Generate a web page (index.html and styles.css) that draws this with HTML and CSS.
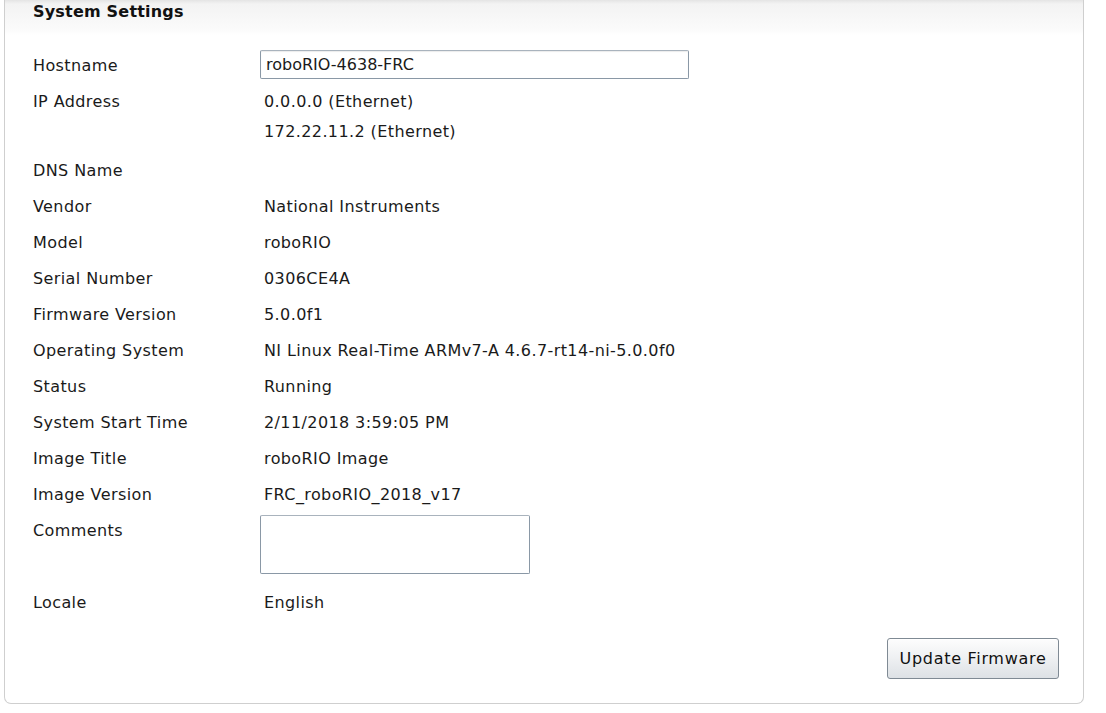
FILE: index.html
```html
<!DOCTYPE html>
<html>

<head>
    <meta charset="utf-8">
    <title>System Settings</title>
    <link rel="stylesheet" href="styles.css">
</head>

<body>
    <div class="panel">
        <div class="panel-head">System Settings</div>
        <div class="panel-body">
            <div class="row">
                <div class="label">Hostname</div>
                <div class="value"><input class="field" type="text" value="roboRIO-4638-FRC"></div>
            </div>
            <div class="row">
                <div class="label">IP Address</div>
                <div class="value ip-list">
                    <div>0.0.0.0 (Ethernet)</div>
                    <div class="ip-more">172.22.11.2 (Ethernet)</div>
                </div>
            </div>
            <div class="row">
                <div class="label">DNS Name</div>
                <div class="value"></div>
            </div>
            <div class="row">
                <div class="label">Vendor</div>
                <div class="value">National Instruments</div>
            </div>
            <div class="row">
                <div class="label">Model</div>
                <div class="value">roboRIO</div>
            </div>
            <div class="row">
                <div class="label">Serial Number</div>
                <div class="value">0306CE4A</div>
            </div>
            <div class="row">
                <div class="label">Firmware Version</div>
                <div class="value">5.0.0f1</div>
            </div>
            <div class="row">
                <div class="label">Operating System</div>
                <div class="value">NI Linux Real-Time ARMv7-A 4.6.7-rt14-ni-5.0.0f0</div>
            </div>
            <div class="row">
                <div class="label">Status</div>
                <div class="value">Running</div>
            </div>
            <div class="row">
                <div class="label">System Start Time</div>
                <div class="value">2/11/2018 3:59:05 PM</div>
            </div>
            <div class="row">
                <div class="label">Image Title</div>
                <div class="value">roboRIO Image</div>
            </div>
            <div class="row">
                <div class="label">Image Version</div>
                <div class="value">FRC_roboRIO_2018_v17</div>
            </div>
            <div class="row">
                <div class="label">Comments</div>
                <div class="value"><textarea class="notes"></textarea></div>
            </div>
            <div class="row">
                <div class="label">Locale</div>
                <div class="value">English</div>
            </div>
            <div class="actions">
                <button class="btn">Update Firmware</button>
            </div>
        </div>
    </div>
</body>

</html>
```

FILE: styles.css
```css
* {
    margin: 0;
    padding: 0;
    box-sizing: border-box;
}

body {
    background: #fff;
    font-family: "DejaVu Sans", Verdana, sans-serif;
    font-size: 16px;
    letter-spacing: .4px;
    color: #1a1a1a;
}

.panel {
    width: 1080px;
    margin-left: 4px;
    border: 1px solid #cfcfcf;
    border-top: none;
    border-radius: 0 0 7px 7px;
}

.panel-head {
    height: 35px;
    padding: 2px 0 0 28px;
    font-weight: bold;
    font-size: 16px;
    letter-spacing: .2px;
    color: #111;
    background: linear-gradient(to bottom, #e4e4e4 0px, #f3f3f3 4px, #fbfbfb 30px, #fff 35px);
}

.panel-body {
    padding: 13px 24px 24px 28px;
}

.row {
    display: flex;
    line-height: 36px;
}

.label {
    width: 227px;
    flex-shrink: 0;
}

.value {
    padding-left: 4px;
    min-height: 36px;
}

.ip-list {
    padding-bottom: 9px;
}

.ip-more {
    line-height: 24px;
}

.field {
    display: block;
    margin: 2px 0 0 -4px;
    width: 429px;
    height: 29px;
    padding: 0 5px;
    font: inherit;
    color: #1a1a1a;
    border: 1px solid #8a98a6;
    border-top-color: #a9b3bd;
    border-radius: 2px;
    box-shadow: inset 0 1px 1px rgba(0, 0, 0, .08);
}

.notes {
    display: block;
    margin: 2px 0 11px -4px;
    width: 270px;
    height: 59px;
    font: inherit;
    border: 1px solid #8a98a6;
    border-top-color: #a9b3bd;
    border-radius: 2px;
    resize: none;
}

.actions {
    display: flex;
    justify-content: flex-end;
    margin-top: 17px;
}

.btn {
    width: 172px;
    height: 41px;
    font: inherit;
    font-size: 16px;
    letter-spacing: .7px;
    color: #111;
    border: 1px solid #7f8a94;
    border-radius: 3px;
    background: linear-gradient(to bottom, #fdfdfd, #eef0f2 50%, #dde1e5);
    box-shadow: inset 0 1px 0 #fff;
}
```
